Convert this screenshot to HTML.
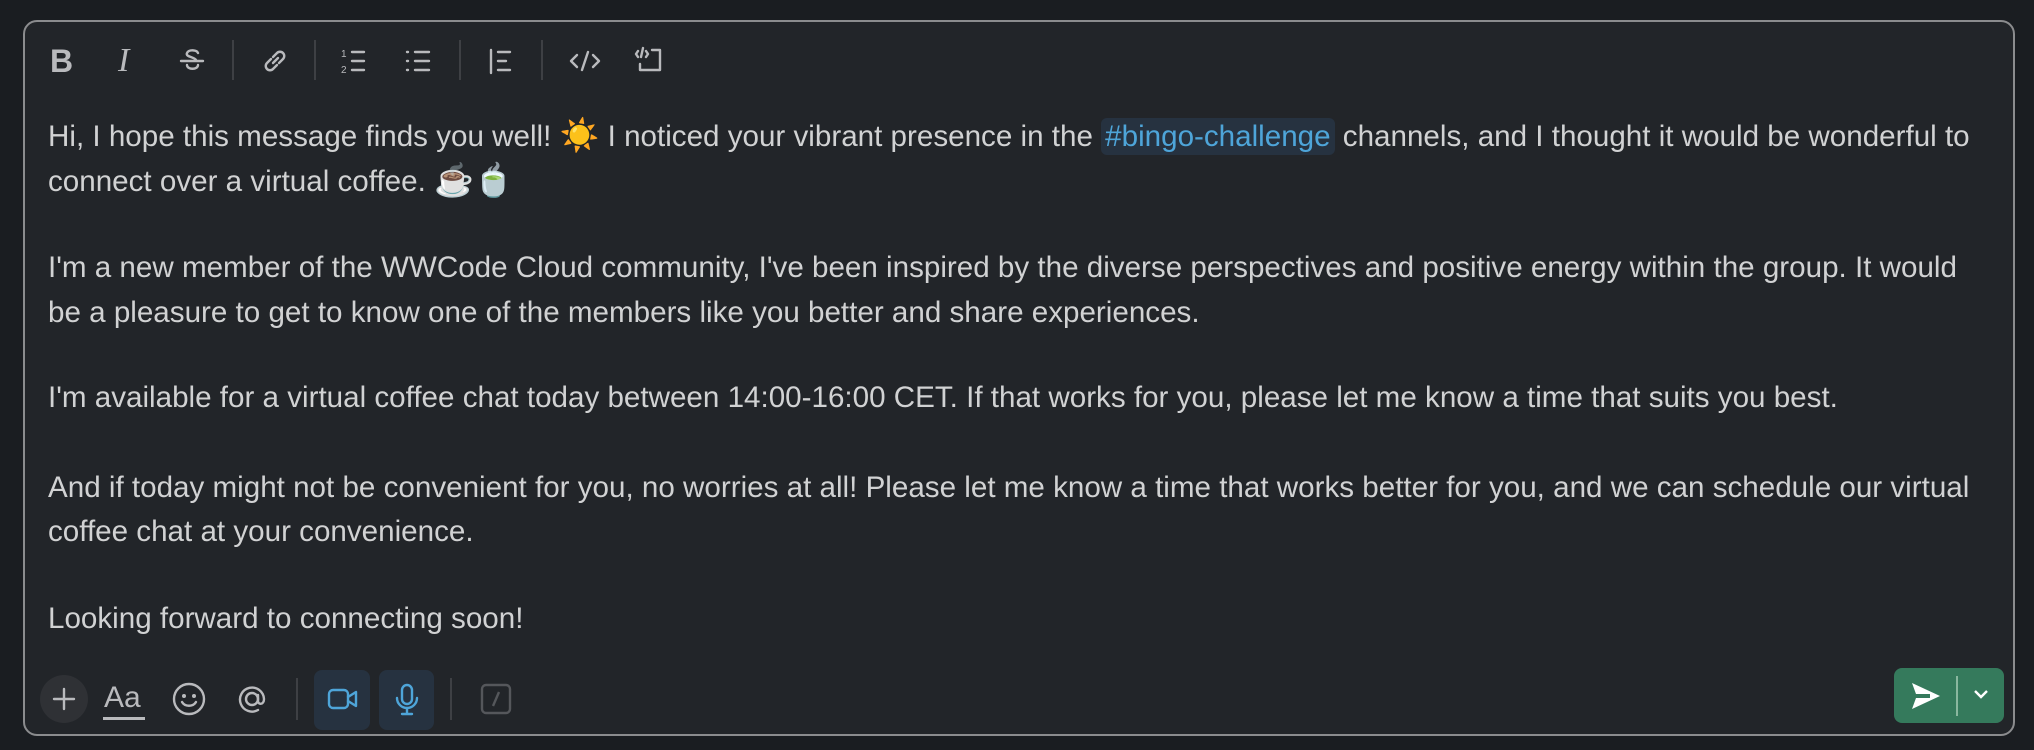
<!DOCTYPE html>
<html><head><meta charset="utf-8"><style>
html,body{margin:0;padding:0;width:2034px;height:750px;background:#1a1d21;overflow:hidden}
.box{position:absolute;left:23px;top:20px;width:1992px;height:716px;box-sizing:border-box;border:2px solid #8b8c8e;border-radius:14px;background:#222529}
.t{position:absolute;left:48px;font-family:"Liberation Sans","Noto Sans CJK JP",sans-serif;font-size:29.6px;color:#d1d2d3;white-space:nowrap;line-height:34px}
.ch{color:#4ea5d9;background:#263240;border-radius:6px;padding:2px 4px}
svg{position:absolute}
.sep{position:absolute;width:2px;height:40px;background:#3e4044}
.ic{stroke:#b9babd;fill:none;stroke-width:2.4;stroke-linecap:round;stroke-linejoin:round}
</style></head><body>
<div class="box"></div>
<!-- toolbar -->
<div class="t" style="left:50px;top:44px;font-size:32px;font-weight:bold;color:#b9babd">B</div>
<div class="t" style="left:118px;top:44px;font-size:34px;font-family:'Liberation Serif',serif;font-style:italic;color:#b9babd">I</div>
<svg style="left:178px;top:46px" width="28" height="30"><path class="ic" d="M20 7c-1-3-9-4-11 0s8 4 9 7M3 15h22M9 19c0 5 11 5 11 0"/></svg>
<div class="sep" style="left:232px;top:40px"></div>
<svg style="left:260px;top:46px" width="30" height="30"><path class="ic" d="M13 17l5-5M11 13l-4 4a4 4 0 006 6l4-4M19 17l4-4a4 4 0 00-6-6l-4 4"/></svg>
<div class="sep" style="left:314px;top:40px"></div>
<svg style="left:340px;top:46px" width="34" height="30"><text x="1" y="11" font-size="10" fill="#b9babd" font-family="Liberation Sans">1</text><text x="1" y="27" font-size="10" fill="#b9babd" font-family="Liberation Sans">2</text><path class="ic" d="M12 6h12M12 15h12M12 24h12"/></svg>
<svg style="left:404px;top:46px" width="34" height="30"><path class="ic" d="M3 6h1M3 15h1M3 24h1M11 6h14M11 15h14M11 24h14"/></svg>
<div class="sep" style="left:459px;top:40px"></div>
<svg style="left:488px;top:46px" width="30" height="30"><path class="ic" d="M3 4v23M10 6h12M10 15h8M10 24h12"/></svg>
<div class="sep" style="left:541px;top:40px"></div>
<svg style="left:568px;top:46px" width="34" height="30"><path class="ic" d="M9 9l-6 6 6 6M25 9l6 6-6 6M20 6l-6 18"/></svg>
<svg style="left:634px;top:44px" width="34" height="32"><path class="ic" d="M18 6h8v20H6v-6M4 7l-2 3 2 3M12 7l2 3-2 3M9 4l-2 9"/></svg>
<!-- text -->
<div class="t" style="top:118px">Hi, I hope this message finds you well! <span style="font-size:32px">☀️</span> I noticed your vibrant presence in the <span class="ch">#bingo-challenge</span> channels, and I thought it would be wonderful to</div>
<div class="t" style="top:163px">connect over a virtual coffee. <span style="font-size:32px">☕🍵</span></div>
<div class="t" style="top:251px">I'm a new member of the WWCode Cloud community, I've been inspired by the diverse perspectives and positive energy within the group. It would</div>
<div class="t" style="top:296px">be a pleasure to get to know one of the members like you better and share experiences.</div>
<div class="t" style="top:381px">I'm available for a virtual coffee chat today between 14:00-16:00 CET. If that works for you, please let me know a time that suits you best.</div>
<div class="t" style="top:471px">And if today might not be convenient for you, no worries at all! Please let me know a time that works better for you, and we can schedule our virtual</div>
<div class="t" style="top:515px">coffee chat at your convenience.</div>
<div class="t" style="top:602px">Looking forward to connecting soon!</div>
<!-- bottom bar -->
<div style="position:absolute;left:40px;top:675px;width:48px;height:48px;border-radius:50%;background:#2f3135"></div>
<svg style="left:50px;top:685px" width="28" height="28"><path class="ic" d="M14 4v20M4 14h20"/></svg>
<div class="t" style="left:104px;top:680px;font-size:30px;color:#b9babd;line-height:36px">Aa</div>
<div style="position:absolute;left:103px;top:717px;width:42px;height:3px;background:#b9babd"></div>
<svg style="left:170px;top:680px" width="38" height="38"><circle class="ic" cx="19" cy="19" r="15"/><circle cx="14" cy="16" r="2" fill="#b9babd"/><circle cx="24" cy="16" r="2" fill="#b9babd"/><path class="ic" d="M12 22c3 5 11 5 14 0"/></svg>
<svg style="left:233px;top:680px" width="38" height="38"><circle class="ic" cx="19" cy="19" r="6"/><path class="ic" d="M25 15v6c0 4 6 4 6-2a12 12 0 10-6 11"/></svg>
<div class="sep" style="left:296px;top:678px;height:42px"></div>
<div style="position:absolute;left:314px;top:670px;width:56px;height:60px;border-radius:8px;background:#263240"></div>
<svg style="left:326px;top:682px" width="34" height="34"><rect class="ic" style="stroke:#4ea5d9" x="3" y="8" width="19" height="18" rx="4"/><path class="ic" style="stroke:#4ea5d9" d="M22 15l8-5v14l-8-5"/></svg>
<div style="position:absolute;left:379px;top:670px;width:55px;height:60px;border-radius:8px;background:#263240"></div>
<svg style="left:390px;top:682px" width="34" height="36"><rect class="ic" style="stroke:#4ea5d9" x="12" y="3" width="10" height="19" rx="5"/><path class="ic" style="stroke:#4ea5d9" d="M7 16a10 10 0 0020 0M17 26v6M12 32h10"/></svg>
<div class="sep" style="left:450px;top:678px;height:42px"></div>
<svg style="left:480px;top:683px" width="32" height="32"><rect x="2" y="2" width="28" height="28" rx="4" fill="none" stroke="#55575b" stroke-width="2.4"/><path d="M19 9l-6 14" stroke="#55575b" stroke-width="2.4"/></svg>
<div style="position:absolute;left:1894px;top:668px;width:110px;height:55px;border-radius:8px;background:#357a5c"></div>
<div style="position:absolute;left:1956px;top:676px;width:2px;height:40px;background:#8ab79f"></div>
<svg style="left:1910px;top:681px" width="32" height="30"><path d="M2 2l28 13L2 28l4-11h14v-4H6z" fill="#fff"/></svg>
<svg style="left:1972px;top:686px" width="18" height="16"><path d="M3 5l6 6 6-6" stroke="#fff" stroke-width="2.4" fill="none"/></svg>
</body></html>
